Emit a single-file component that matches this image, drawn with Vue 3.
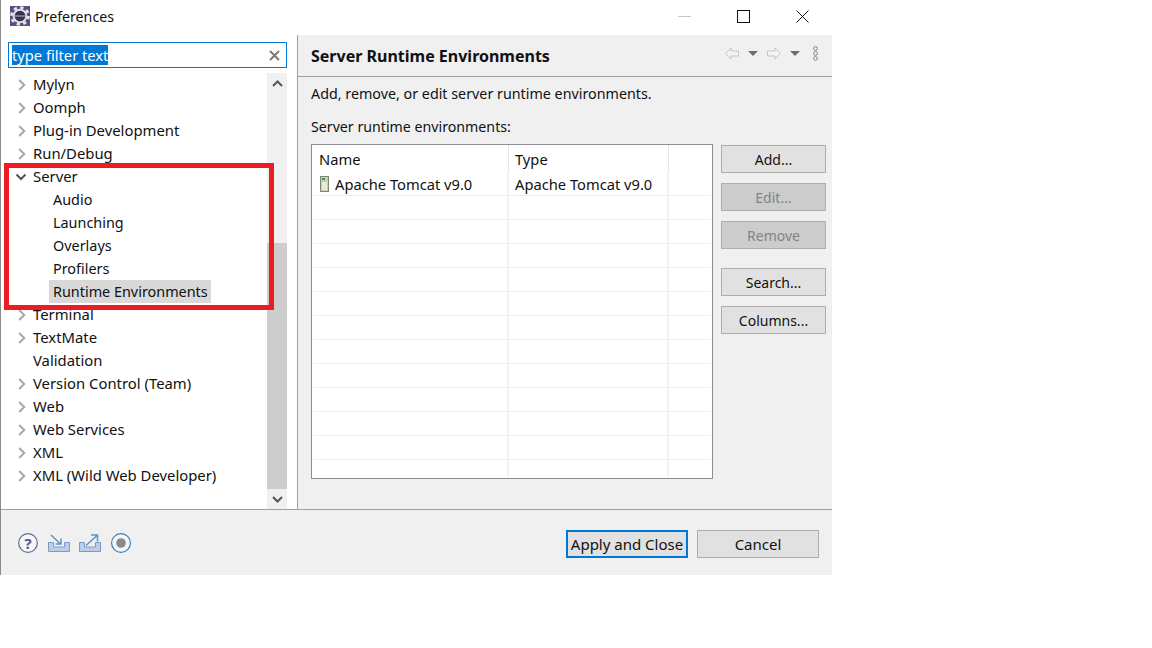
<script setup>
const tree = [
  { label: 'Mylyn', arrow: 'right' }, { label: 'Oomph', arrow: 'right' }, { label: 'Plug-in Development', arrow: 'right' },
  { label: 'Run/Debug', arrow: 'right' }, { label: 'Server', arrow: 'down' },
  { label: 'Audio', child: true }, { label: 'Launching', child: true }, { label: 'Overlays', child: true }, { label: 'Profilers', child: true },
  { label: 'Runtime Environments', child: true, selected: true },
  { label: 'Terminal', arrow: 'right' }, { label: 'TextMate', arrow: 'right' }, { label: 'Validation' },
  { label: 'Version Control (Team)', arrow: 'right' }, { label: 'Web', arrow: 'right' }, { label: 'Web Services', arrow: 'right' },
  { label: 'XML', arrow: 'right' }, { label: 'XML (Wild Web Developer)', arrow: 'right' }
]
const emptyRows = 12
</script>

<template>
  <div class="page">
    <div class="window">
      <header class="titlebar">
        <svg class="app-icon" width="20" height="20" viewBox="0 0 20 20">
          <rect width="20" height="20" fill="#5f4b86"/>
          <circle cx="10" cy="10" r="8.300" fill="none" stroke="#e6e6ea" stroke-width="3" stroke-dasharray="3.200 3.320"/>
          <circle cx="10" cy="10" r="7.300" fill="#dcdce0"/>
          <circle cx="10" cy="10" r="5.300" fill="#37334a"/>
          <path d="M5 10h10" stroke="#8f8ca3" stroke-width="1.500"/>
        </svg>
        <span class="title">Preferences</span>
        <div class="winctrls">
          <span class="ctrl"><i class="min"></i></span>
          <span class="ctrl"><i class="max"></i></span>
          <span class="ctrl">
            <svg width="13" height="13" viewBox="0 0 13 13"><path d="M.5.5l12 12M12.500.5l-12 12" stroke="#111" fill="none"/></svg>
          </span>
        </div>
      </header>

      <div class="body">
        <aside class="left">
          <div class="filter">
            <span class="filter-text">type filter text</span>
            <svg width="11" height="11" viewBox="0 0 11 11"><path d="M1 1l9 9M10 1l-9 9" stroke="#7a7a7a" stroke-width="2" fill="none"/></svg>
          </div>
          <div class="tree-wrap">
            <ul class="tree">
              <li v-for="n in tree" :key="n.label" class="node" :class="{ child: n.child }">
                <span class="twisty">
                  <svg v-if="n.arrow === 'right'" class="tw-right" width="8" height="12" viewBox="0 0 8 12"><path d="M1.200 1l5 5-5 5" stroke="#aaa" stroke-width="2.100" fill="none"/></svg>
                  <svg v-else-if="n.arrow === 'down'" width="12" height="8" viewBox="0 0 12 8"><path d="M1.500 1.500L6 6l4.500-4.500" stroke="#555" stroke-width="2" fill="none"/></svg>
                </span>
                <span class="node-label" :class="{ selected: n.selected }">{{ n.label }}</span>
              </li>
            </ul>
            <div class="scrollbar">
              <div class="sb-btn">
                <svg width="11" height="7" viewBox="0 0 11 7"><path d="M1 6l4.500-4.500L10 6" stroke="#555" stroke-width="2" fill="none"/></svg>
              </div>
              <div class="sb-track"><div class="sb-thumb"></div></div>
              <div class="sb-btn">
                <svg width="11" height="7" viewBox="0 0 11 7"><path d="M1 1l4.500 4.500L10 1" stroke="#555" stroke-width="2" fill="none"/></svg>
              </div>
            </div>
          </div>
        </aside>

        <div class="sash"></div>

        <main class="right">
          <div class="pane-head">
            <h1>Server Runtime Environments</h1>
            <div class="nav">
              <svg width="16" height="13" viewBox="0 0 16 13"><path d="M1.700 6.500L7 1v3h7.500v5H7v3z" fill="#f4f4f4" stroke="#c4c4c4"/></svg>
              <svg class="tri" width="10" height="5" viewBox="0 0 10 5"><path d="M0 0h10L5 5z" fill="#6e6e6e"/></svg>
              <svg width="16" height="13" viewBox="0 0 16 13"><path d="M14.300 6.500L9 1v3H1.500v5H9v3z" fill="#f4f4f4" stroke="#c4c4c4"/></svg>
              <svg class="tri" width="10" height="5" viewBox="0 0 10 5"><path d="M0 0h10L5 5z" fill="#6e6e6e"/></svg>
              <svg class="dots" width="5" height="15" viewBox="0 0 5 15"><g fill="#fff" stroke="#777"><circle cx="2.500" cy="2.500" r="1.800"/><circle cx="2.500" cy="7.500" r="1.800"/><circle cx="2.500" cy="12.500" r="1.800"/></g></svg>
            </div>
          </div>
          <div class="content">
            <p class="desc">Add, remove, or edit server runtime environments.</p>
            <p class="lbl">Server runtime environments:</p>
            <div class="table-row">
              <div class="table">
                <div class="thead">
                  <span class="c1">Name</span><span class="c2">Type</span><span class="c3"></span>
                </div>
                <div class="rows">
                  <div class="tr">
                    <span class="c1 name-cell">
                      <svg width="10" height="16" viewBox="0 0 10 16">
                        <rect x=".5" y=".5" width="8" height="15" fill="#c9cfb4" stroke="#7d8a70"/>
                        <rect x="2" y="2" width="3" height="2" fill="#2fa34a"/>
                        <rect x="2" y="6" width="5" height="8" fill="#e8ebdc"/>
                      </svg>
                      <span class="name-text">Apache Tomcat v9.0</span>
                    </span>
                    <span class="c2">Apache Tomcat v9.0</span><span class="c3"></span>
                  </div>
                  <div v-for="i in emptyRows" :key="i" class="tr">
                    <span class="c1"></span><span class="c2"></span><span class="c3"></span>
                  </div>
                </div>
              </div>
              <div class="side">
                <button class="btn">Add...</button>
                <button class="btn off">Edit...</button>
                <button class="btn off">Remove</button>
                <button class="btn gap">Search...</button>
                <button class="btn">Columns...</button>
              </div>
            </div>
          </div>
        </main>
      </div>

      <footer class="footer">
        <div class="tools">
          <svg width="20" height="20" viewBox="0 0 20 20"><circle cx="10" cy="10" r="9.300" fill="#f6f6f8" stroke="#5f6f92" stroke-width="1.200"/><text x="10" y="15.500" text-anchor="middle" class="q">?</text></svg>
          <svg width="22" height="20" viewBox="0 0 22 20"><path d="M.5 9.500h5v4.500h11V9.500h5v9H.5z" fill="#b9cfe8" stroke="#7c9cc6"/><path d="M3 2l9 8.500M13 5.500v5.500H7.500" stroke="#5596c8" stroke-width="1.500" fill="none"/></svg>
          <svg class="export" width="22" height="20" viewBox="0 0 22 20"><path d="M.5 9.500h5v4.500h11V9.500h5v9H.5z" fill="#b9cfe8" stroke="#7c9cc6"/><path d="M7 12.500L18 2.500M12 2h6.500v6.500" stroke="#5596c8" stroke-width="1.500" fill="none"/></svg>
          <svg width="20" height="20" viewBox="0 0 20 20"><circle cx="10" cy="10" r="9.400" fill="#f4f6f8" stroke="#3f7fb5" stroke-width="1.200"/><circle cx="10" cy="10" r="4.800" fill="#8a8a8a"/></svg>
        </div>
        <div class="actions">
          <button class="btn primary">Apply and Close</button>
          <button class="btn wide">Cancel</button>
        </div>
      </footer>

      <div class="annotation"></div>
    </div>
  </div>
</template>

<style>
html, body { margin: 0; background: #fff; }
</style>

<style scoped>
.page { width: 1152px; height: 648px; background: #fff; overflow: hidden; font-family: "Noto Sans", "Open Sans", sans-serif; font-size: 14.700px; color: #111; }
.window { position: relative; width: 832px; height: 575px; box-sizing: border-box; border-left: 1px solid #8a8a8a; display: flex; flex-direction: column; background: #f0f0f0; }
.titlebar { height: 35px; flex: none; background: #fff; display: flex; align-items: center; padding: 0 0 3px 9px; box-sizing: border-box; }
.app-icon { margin-right: 5px; }
.title { font-size: 14.200px; margin-top: 1px; }
.winctrls { margin-left: auto; display: flex; margin-top: 1px; }
.ctrl { width: 59px; height: 32px; display: flex; align-items: center; justify-content: center; }
.min { width: 13px; height: 1px; background: #c4c4c4; }
.max { width: 11px; height: 11px; border: 1px solid #111; }
.body { flex: 1; display: flex; min-height: 0; }
.left { width: 286px; flex: none; background: #fff; box-sizing: border-box; display: flex; flex-direction: column; }
.filter { margin: 7px 0 0 7px; height: 26px; box-sizing: border-box; border: 1px solid #0078d7; display: flex; align-items: center; justify-content: space-between; padding: 0 6px 0 3px; background: #fff; }
.filter-text { background: #0078d7; color: #fff; line-height: 20px; }
.tree-wrap { flex: 1; display: flex; margin-top: 5px; min-height: 0; }
.tree { flex: 1; list-style: none; margin: 0; padding: 0; }
.node { height: 23px; display: flex; align-items: center; font-size: 14.850px; }
.twisty { width: 32px; flex: none; padding-left: 14px; box-sizing: border-box; display: flex; align-items: center; }
.tw-right { margin-left: 3px; }
.node.child .twisty { width: 48px; }
.node-label { line-height: 23px; white-space: nowrap; }
.node.child .node-label { padding: 0 3px 0 4px; font-size: 14.400px; }
.selected { background: #d9d9d9; }
.scrollbar { width: 20px; flex: none; background: #f0f0f0; display: flex; flex-direction: column; }
.sb-btn { height: 20px; flex: none; display: flex; align-items: center; justify-content: center; }
.sb-track { flex: 1; display: flex; flex-direction: column; justify-content: flex-end; }
.sb-thumb { height: 246px; background: #cdcdcd; }
.sash { width: 11px; flex: none; background: #fff; border-right: 1px solid #a0a0a0; box-sizing: border-box; }
.right { flex: 1; min-width: 0; display: flex; flex-direction: column; background: #f0f0f0; }
.pane-head { height: 42px; flex: none; box-sizing: border-box; border-bottom: 1px solid #a0a0a0; display: flex; align-items: center; justify-content: space-between; padding: 0 14px 0 13px; }
.pane-head h1 { margin: 1px 0 0; font-size: 16px; font-weight: 700; line-height: 22px; }
.nav { display: flex; align-items: center; margin-bottom: 4px; }
.nav .tri { margin: 0 8px; }
.nav .dots { margin-left: 5px; }
.content { padding: 6px 6px 0 13px; }
.desc, .lbl { margin: 0; line-height: 21px; font-size: 14.300px; }
.lbl { margin-top: 12px; font-size: 14.200px; }
.table-row { display: flex; margin-top: 7px; }
.table { width: 402px; height: 335px; box-sizing: border-box; border: 1px solid #8a8f96; background: #fff; }
.thead { height: 27px; display: flex; align-items: center; }
.thead > span { height: 100%; line-height: 29px; box-sizing: border-box; border-right: 1px solid #e5e5e5; }
.rows { height: 304px; overflow: hidden; padding-left: 1px; margin-right: 1px; }
.tr { height: 24px; display: flex; border-bottom: 1px solid #f0f0f0; box-sizing: border-box; }
.tr > span { line-height: 25px; box-sizing: border-box; border-right: 2px solid #edf3fa; white-space: nowrap; }
.rows .c1 { width: 196px; }
.c1 { width: 197px; padding-left: 7px; flex: none; }
.c2 { width: 160px; padding-left: 6px; flex: none; }
.c3 { flex: 1; border-right: none !important; }
.rows .name-cell { display: flex; align-items: center; gap: 5px; padding-left: 7px; }
.name-text { margin-top: 1px; }
.side { margin-left: 8px; display: flex; flex-direction: column; gap: 10px; padding-top: 1px; font-size: 14px; }
.btn { width: 105px; height: 28px; box-sizing: border-box; background: #e1e1e1; border: 1px solid #adadad; padding: 0; font: inherit; color: #111; display: block; }
.btn.off { background: #cccccc; color: #838383; }
.btn.gap { margin-top: 9px; }
.footer { height: 66px; flex: none; box-sizing: border-box; border-top: 1px solid #a0a0a0; display: flex; justify-content: space-between; padding: 20px 13px 0 17px; font-size: 15px; }
.tools { display: flex; gap: 10px; align-items: flex-start; margin-top: 3px; }
.export { margin-left: -1px; }
.q { font: 700 15px "Noto Sans", sans-serif; fill: #4d5f85; }
.actions { display: flex; gap: 9px; }
.btn.wide { width: 122px; }
.btn.primary { width: 122px; border: 2px solid #0078d7; }
.annotation { position: absolute; left: 3px; top: 163px; width: 270px; height: 147px; box-sizing: border-box; border: 5px solid #ed1c24; pointer-events: none; }
</style>
